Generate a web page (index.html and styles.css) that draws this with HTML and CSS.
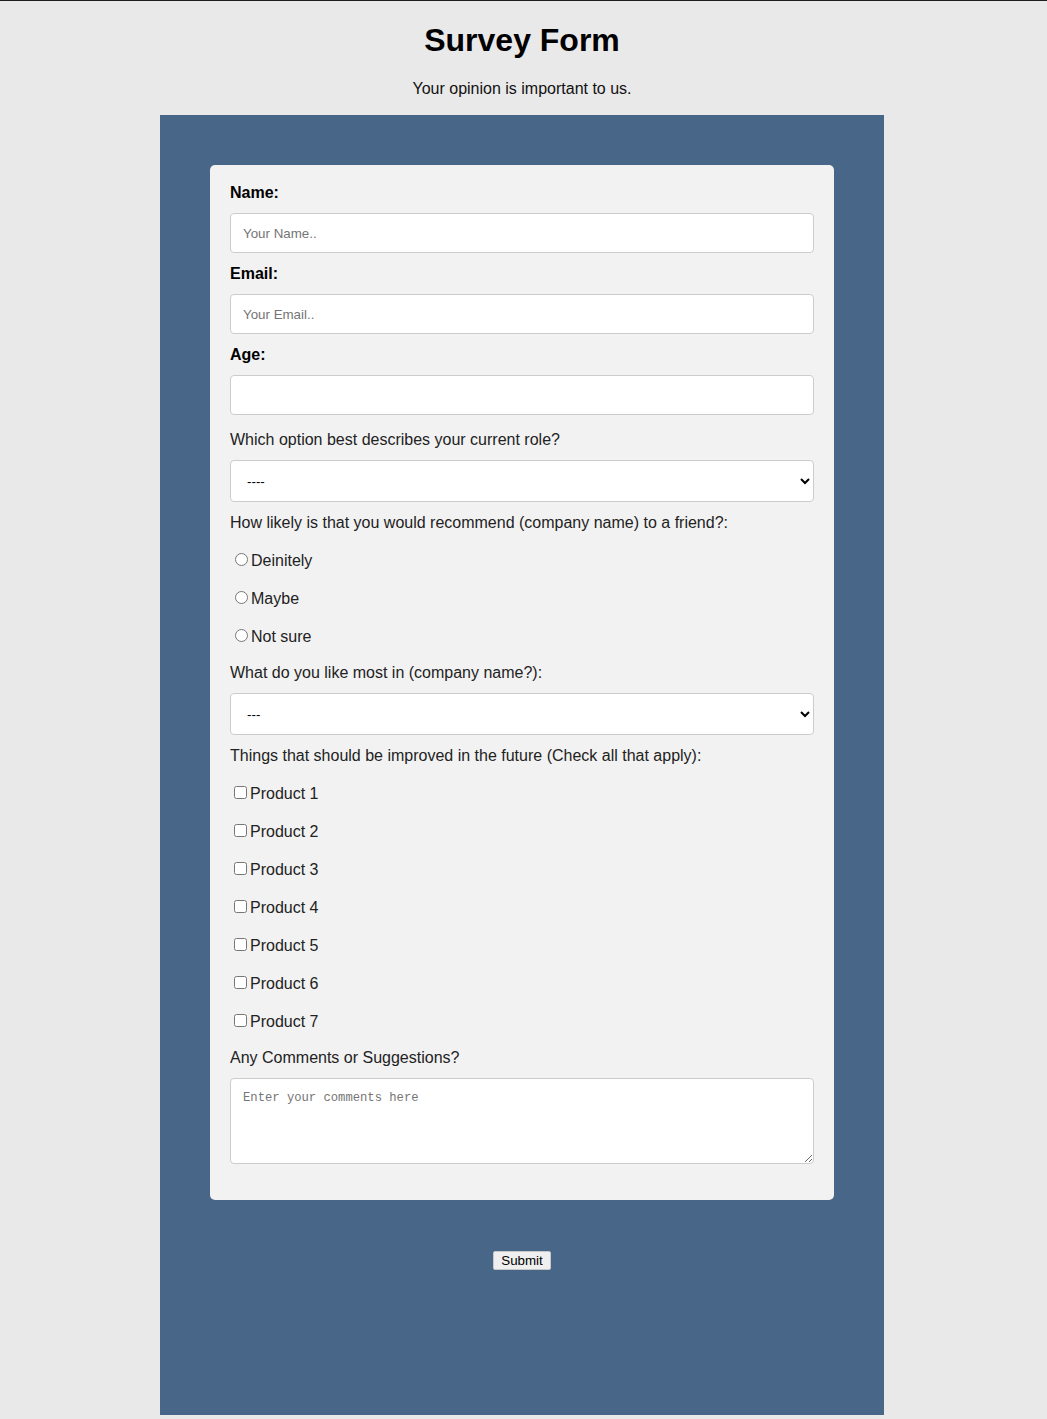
FILE: index.html
```html
<!DOCTYPE html>
<html>
<head>
<meta charset="utf-8">
<title>Survey Form</title>
<link rel="stylesheet" href="styles.css">
</head>
<body>
<h1 class="title">Survey Form</h1>
<p class="subtitle">Your opinion is important to us.</p>
<div class="panel">
  <form class="card">
    <label class="lbl" for="name">Name:</label>
    <input class="field" id="name" type="text" placeholder="Your Name..">
    <label class="lbl" for="email">Email:</label>
    <input class="field" id="email" type="email" placeholder="Your Email..">
    <label class="lbl" for="age">Age:</label>
    <input class="field" id="age" type="number">

    <p class="q q-after-field">Which option best describes your current role?</p>
    <select class="sel">
      <option>----</option>
    </select>

    <p class="q q-after-sel">How likely is that you would recommend (company name) to a friend?:</p>
    <div class="opts">
      <label class="opt"><input type="radio" name="rec">Deinitely</label>
      <label class="opt"><input type="radio" name="rec">Maybe</label>
      <label class="opt"><input type="radio" name="rec">Not sure</label>
    </div>

    <p class="q q-after-opts">What do you like most in (company name?):</p>
    <select class="sel">
      <option>---</option>
    </select>

    <p class="q q-after-sel">Things that should be improved in the future (Check all that apply):</p>
    <div class="opts">
      <label class="opt"><input type="checkbox">Product 1</label>
      <label class="opt"><input type="checkbox">Product 2</label>
      <label class="opt"><input type="checkbox">Product 3</label>
      <label class="opt"><input type="checkbox">Product 4</label>
      <label class="opt"><input type="checkbox">Product 5</label>
      <label class="opt"><input type="checkbox">Product 6</label>
      <label class="opt"><input type="checkbox">Product 7</label>
    </div>

    <p class="q q-after-opts">Any Comments or Suggestions?</p>
    <textarea class="comments" placeholder="Enter your comments here"></textarea>
  </form>
  <div class="actions">
    <button class="submit" type="submit">Submit</button>
  </div>
</div>
</body>
</html>
```
FILE: styles.css
```css
html, body {
  margin: 0;
  padding: 0;
}
body {
  background: #e9e9e9;
  border-top: 1px solid #1e1e1e;
  padding-right: 3px;
  font-family: "Liberation Sans", Arial, sans-serif;
  color: #000;
}
.title {
  text-align: center;
  font-size: 32px;
  font-weight: bold;
  margin: 21px 0 21px;
  line-height: 37px;
}
.subtitle {
  text-align: center;
  font-size: 16px;
  line-height: 18px;
  margin: 0 0 17px;
  color: #111;
}
.panel {
  width: 724px;
  margin: 0 auto;
  background: #486688;
  padding: 50px 0 145px;
  box-sizing: border-box;
}
.card {
  width: 624px;
  margin: 0 auto;
  background: #f2f2f2;
  border-radius: 5px;
  padding: 17px 20px 36px;
  box-sizing: border-box;
  display: flex;
  flex-direction: column;
}
.lbl {
  display: block;
  font-weight: bold;
  font-size: 16px;
  line-height: 21px;
  margin: 0 0 10px;
}
.field {
  display: block;
  width: 100%;
  height: 40px;
  box-sizing: border-box;
  border: 1px solid #cccccc;
  border-radius: 4px;
  background: #fff;
  padding: 0 12px;
  margin: 0 0 10px;
  font-family: "Liberation Sans", Arial, sans-serif;
  font-size: 13.33px;
}
.field::placeholder {
  color: #757575;
}
.q {
  font-size: 16px;
  line-height: 21px;
  color: #222;
  margin: 0 0 10px;
}
.q-after-field {
  margin-top: 4px;
}
.q-after-sel {
  margin-top: 10px;
}
.q-after-opts {
  margin-top: 15px;
}
.sel {
  display: block;
  width: 100%;
  height: 42px;
  box-sizing: border-box;
  border: 1px solid #cccccc;
  border-radius: 4px;
  background: #fff;
  padding: 0 12px;
  font-family: "Liberation Sans", Arial, sans-serif;
  font-size: 13.33px;
  color: #000;
}
.opts {
  display: flex;
  flex-direction: column;
  gap: 17px;
  margin-top: 7px;
}
.opt {
  display: block;
  font-size: 16px;
  line-height: 21px;
  color: #222;
}
.comments {
  display: block;
  width: 100%;
  height: 86px;
  box-sizing: border-box;
  border: 1px solid #cccccc;
  border-radius: 4px;
  background: #fff;
  padding: 12px;
  font-family: "Liberation Mono", "DejaVu Sans Mono", monospace;
  font-size: 12.2px;
  margin: 0;
}
.comments::placeholder {
  color: #757575;
}
.actions {
  display: flex;
  justify-content: center;
  margin-top: 51px;
}
.submit {
  font-family: "Liberation Sans", Arial, sans-serif;
  font-size: 13.33px;
  height: 19px;
  padding: 0 7px;
  line-height: 15px;
  background: #efefef;
  border: 1px solid #c8c8c8;
  border-radius: 2px;
  color: #000;
}
```
